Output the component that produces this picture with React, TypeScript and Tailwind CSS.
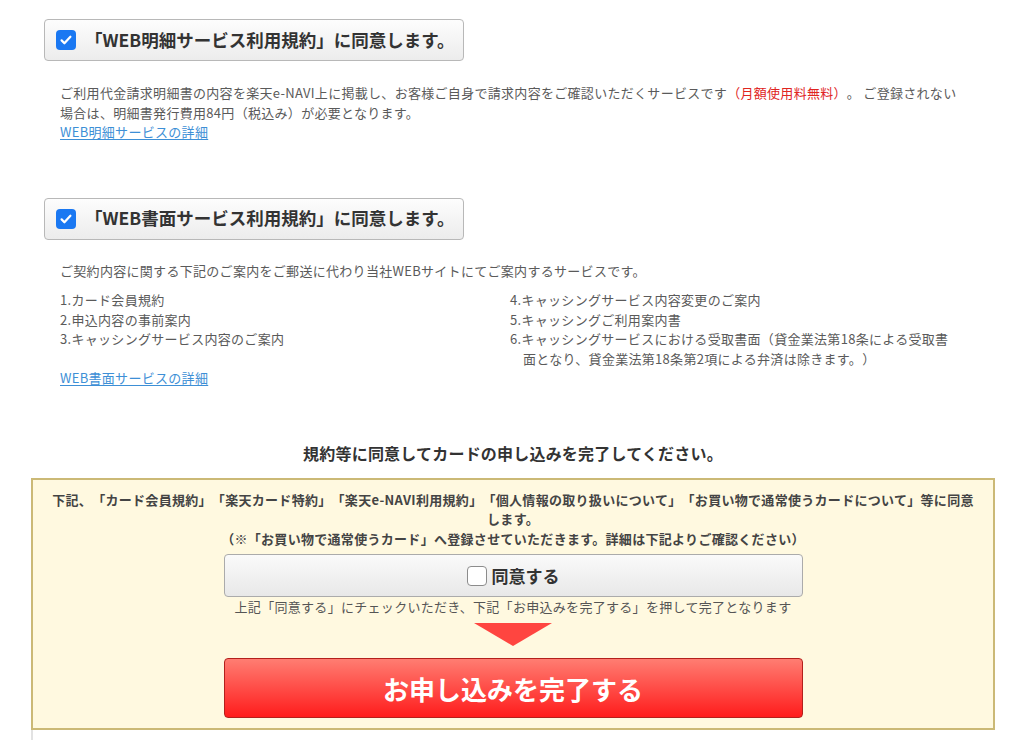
import type { ReactNode } from "react";

const FONT = { fontFamily: '"Noto Sans CJK JP", "Noto Sans", sans-serif' };

function CheckMark({ checked }: { checked: boolean }) {
  if (!checked) {
    return <span className="inline-block h-[20px] w-[20px] shrink-0 rounded-[4px] border border-[#8c8c8c] bg-white" />;
  }
  return (
    <span className="flex h-[20px] w-[20px] shrink-0 items-center justify-center rounded-[4px] bg-[#1a78f2]">
      <svg viewBox="0 0 20 20" className="h-[16px] w-[16px]" fill="none" stroke="white" strokeWidth={2.8} strokeLinecap="round" strokeLinejoin="round">
        <path d="M4.5 10.5l3.5 3.5 7.5-8" />
      </svg>
    </span>
  );
}

function AgreeToggle({ children }: { children: ReactNode }) {
  return (
    <div className="flex h-[42px] w-[420px] items-center gap-[9px] rounded-[4px] border border-[#b8b8b8] bg-[linear-gradient(180deg,#fdfdfd_0%,#ececec_100%)] pl-[11px]">
      <CheckMark checked />
      <span className="whitespace-nowrap text-[17.5px] font-bold text-[#333]">{children}</span>
    </div>
  );
}

function DetailLink({ children }: { children: ReactNode }) {
  return <a className="text-[13px] text-[#3d8fd6] underline underline-offset-2">{children}</a>;
}

export default function App() {
  return (
    <div className="min-h-[740px] w-full bg-white pl-[31px] pr-[29px] [text-spacing-trim:space-all]" style={FONT}>
      <section className="pl-[13px] pt-[19px]">
        <AgreeToggle>「WEB明細サービス利用規約」に同意します。</AgreeToggle>
      </section>
      <div className="mt-[22px] pl-[29px] text-[13px] leading-[19.5px] tracking-[0.3px] text-[#5a5a5a]">
        <p className="whitespace-nowrap">
          ご利用代金請求明細書の内容を楽天e-NAVI上に掲載し、お客様ご自身で請求内容をご確認いただくサービスです
          <span className="text-[#e0251f]">（月額使用料無料）</span>。 ご登録されない
          <br />
          場合は、明細書発行費用84円（税込み）が必要となります。
        </p>
        <DetailLink>WEB明細サービスの詳細</DetailLink>
      </div>

      <section className="mt-[56px] pl-[13px]">
        <AgreeToggle>「WEB書面サービス利用規約」に同意します。</AgreeToggle>
      </section>
      <div className="mt-[21px] pl-[29px] text-[13px] leading-[19.5px] tracking-[0.3px] text-[#5a5a5a]">
        <p>ご契約内容に関する下記のご案内をご郵送に代わり当社WEBサイトにてご案内するサービスです。</p>
        <div className="mt-[10px] grid grid-cols-[450px_470px]">
          <ul>
            <li>1.カード会員規約</li>
            <li>2.申込内容の事前案内</li>
            <li>3.キャッシングサービス内容のご案内</li>
          </ul>
          <ul>
            <li>4.キャッシングサービス内容変更のご案内</li>
            <li>5.キャッシングご利用案内書</li>
            <li className="whitespace-nowrap pl-[13px] indent-[-13px]">
              6.キャッシングサービスにおける受取書面（貸金業法第18条による受取書
              <br />
              面となり、貸金業法第18条第2項による弁済は除きます。）
            </li>
          </ul>
        </div>
        <DetailLink>WEB書面サービスの詳細</DetailLink>
      </div>

      <h2 className="mt-[53px] text-center text-[16px] font-bold leading-[24px] tracking-[0.2px] text-[#333]">
        規約等に同意してカードの申し込みを完了してください。
      </h2>

      <div className="mt-[13px] border-2 border-[#cbb976] bg-[#fff9e0] pb-[10px] pt-[10px] text-center">
        <p className="whitespace-nowrap text-[13px] font-bold leading-[19.5px] tracking-[0.3px] text-[#444]">
          下記、「カード会員規約」「楽天カード特約」「楽天e-NAVI利用規約」「個人情報の取り扱いについて」「お買い物で通常使うカードについて」等に同意
          <br />
          します。
          <br />
          （※「お買い物で通常使うカード」へ登録させていただきます。詳細は下記よりご確認ください）
        </p>
        <div className="mx-auto mt-[6px] flex h-[43px] w-[579px] items-center justify-center gap-[5px] rounded-[4px] border border-[#ababab] bg-[linear-gradient(180deg,#fafafa_0%,#e8e8e8_100%)]">
          <CheckMark checked={false} />
          <span className="text-[17px] font-bold text-[#333]">同意する</span>
        </div>
        <p className="mt-[1px] whitespace-nowrap text-[13px] leading-[18px] tracking-[0.3px] text-[#555]">
          上記「同意する」にチェックいただき、下記「お申込みを完了する」を押して完了となります
        </p>
        <div className="mx-auto mt-[7px] h-0 w-0 border-l-[39px] border-r-[39px] border-t-[23px] border-l-transparent border-r-transparent border-t-[#ff4540]" />
        <button className="mx-auto mt-[12px] flex h-[60px] w-[579px] items-center justify-center rounded-[4px] border border-[#b3201c] bg-[linear-gradient(180deg,#ff7d72_0%,#ff1c1c_100%)] text-[26px] font-bold text-white">
          お申し込みを完了する
        </button>
      </div>
      <div className="h-[20px] border-l-2 border-[#e2e2e2]" />
    </div>
  );
}
